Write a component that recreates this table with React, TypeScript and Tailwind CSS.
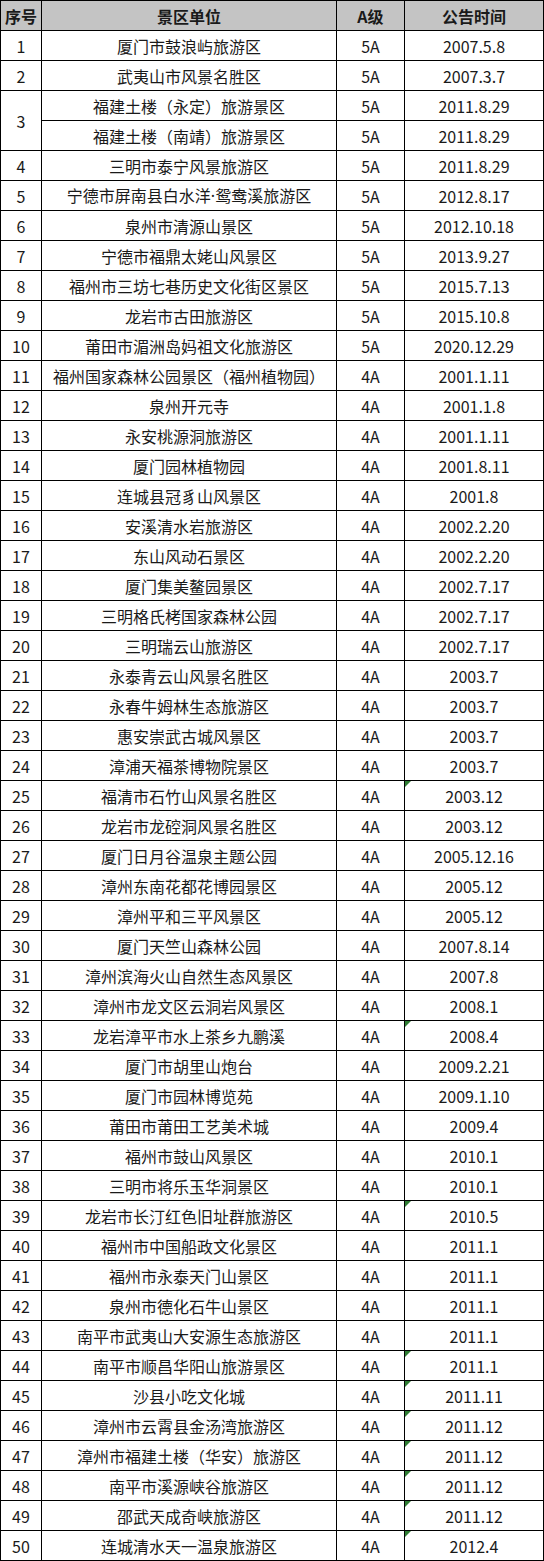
const rows: [string, string[], string, string[], boolean?][] = [
  ["1", ["厦门市鼓浪屿旅游区"], "5A", ["2007.5.8"]],
  ["2", ["武夷山市风景名胜区"], "5A", ["2007.3.7"]],
  ["3", ["福建土楼（永定）旅游景区", "福建土楼（南靖）旅游景区"], "5A", ["2011.8.29", "2011.8.29"]],
  ["4", ["三明市泰宁风景旅游区"], "5A", ["2011.8.29"]],
  ["5", ["宁德市屏南县白水洋·鸳鸯溪旅游区"], "5A", ["2012.8.17"]],
  ["6", ["泉州市清源山景区"], "5A", ["2012.10.18"]],
  ["7", ["宁德市福鼎太姥山风景区"], "5A", ["2013.9.27"]],
  ["8", ["福州市三坊七巷历史文化街区景区"], "5A", ["2015.7.13"]],
  ["9", ["龙岩市古田旅游区"], "5A", ["2015.10.8"]],
  ["10", ["莆田市湄洲岛妈祖文化旅游区"], "5A", ["2020.12.29"]],
  ["11", ["福州国家森林公园景区（福州植物园）"], "4A", ["2001.1.11"]],
  ["12", ["泉州开元寺"], "4A", ["2001.1.8"]],
  ["13", ["永安桃源洞旅游区"], "4A", ["2001.1.11"]],
  ["14", ["厦门园林植物园"], "4A", ["2001.8.11"]],
  ["15", ["连城县冠豸山风景区"], "4A", ["2001.8"]],
  ["16", ["安溪清水岩旅游区"], "4A", ["2002.2.20"]],
  ["17", ["东山风动石景区"], "4A", ["2002.2.20"]],
  ["18", ["厦门集美鳌园景区"], "4A", ["2002.7.17"]],
  ["19", ["三明格氏栲国家森林公园"], "4A", ["2002.7.17"]],
  ["20", ["三明瑞云山旅游区"], "4A", ["2002.7.17"]],
  ["21", ["永泰青云山风景名胜区"], "4A", ["2003.7"]],
  ["22", ["永春牛姆林生态旅游区"], "4A", ["2003.7"]],
  ["23", ["惠安崇武古城风景区"], "4A", ["2003.7"]],
  ["24", ["漳浦天福茶博物院景区"], "4A", ["2003.7"]],
  ["25", ["福清市石竹山风景名胜区"], "4A", ["2003.12"], true],
  ["26", ["龙岩市龙硿洞风景名胜区"], "4A", ["2003.12"]],
  ["27", ["厦门日月谷温泉主题公园"], "4A", ["2005.12.16"]],
  ["28", ["漳州东南花都花博园景区"], "4A", ["2005.12"]],
  ["29", ["漳州平和三平风景区"], "4A", ["2005.12"]],
  ["30", ["厦门天竺山森林公园"], "4A", ["2007.8.14"]],
  ["31", ["漳州滨海火山自然生态风景区"], "4A", ["2007.8"]],
  ["32", ["漳州市龙文区云洞岩风景区"], "4A", ["2008.1"]],
  ["33", ["龙岩漳平市水上茶乡九鹏溪"], "4A", ["2008.4"], true],
  ["34", ["厦门市胡里山炮台"], "4A", ["2009.2.21"]],
  ["35", ["厦门市园林博览苑"], "4A", ["2009.1.10"]],
  ["36", ["莆田市莆田工艺美术城"], "4A", ["2009.4"]],
  ["37", ["福州市鼓山风景区"], "4A", ["2010.1"]],
  ["38", ["三明市将乐玉华洞景区"], "4A", ["2010.1"]],
  ["39", ["龙岩市长汀红色旧址群旅游区"], "4A", ["2010.5"], true],
  ["40", ["福州市中国船政文化景区"], "4A", ["2011.1"]],
  ["41", ["福州市永泰天门山景区"], "4A", ["2011.1"]],
  ["42", ["泉州市德化石牛山景区"], "4A", ["2011.1"]],
  ["43", ["南平市武夷山大安源生态旅游区"], "4A", ["2011.1"]],
  ["44", ["南平市顺昌华阳山旅游景区"], "4A", ["2011.1"], true],
  ["45", ["沙县小吃文化城"], "4A", ["2011.11"], true],
  ["46", ["漳州市云霄县金汤湾旅游区"], "4A", ["2011.12"], true],
  ["47", ["漳州市福建土楼（华安）旅游区"], "4A", ["2011.12"], true],
  ["48", ["南平市溪源峡谷旅游区"], "4A", ["2011.12"], true],
  ["49", ["邵武天成奇峡旅游区"], "4A", ["2011.12"], true],
  ["50", ["连城清水天一温泉旅游区"], "4A", ["2012.4"], true],
];

const cell = "border border-black text-center align-middle p-0 leading-none whitespace-nowrap";

function Flag() {
  // excel's little green corner mark
  return <span className="absolute left-0 top-0 w-0 h-0 border-t-[6px] border-r-[6px] border-t-[#2e7d32] border-r-transparent" />;
}

// the middle dot should be the narrow latin one, not the full-width CJK glyph
function Name({ text }: { text: string }) {
  const parts = text.split("·");
  if (parts.length === 1) return <>{text}</>;
  return (
    <>
      {parts[0]}
      <span className="font-['Noto_Sans',sans-serif]">·</span>
      {parts[1]}
    </>
  );
}

export default function App() {
  return (
    <main className="bg-white w-[544px] text-[#1a1a1a] font-['Noto_Sans_CJK_SC','Noto_Sans',sans-serif]">
      <table className="border-collapse table-fixed w-[543px] text-[16px]">
        <colgroup>
          <col className="w-[41px]" />
          <col className="w-[295px]" />
          <col className="w-[68px]" />
          <col className="w-[139px]" />
        </colgroup>
        <thead>
          <tr className="h-[30px] bg-[#c4c4c4] font-bold">
            <th className={cell}>序号</th>
            <th className={cell}>景区单位</th>
            <th className={cell}>A级</th>
            <th className={cell}>公告时间</th>
          </tr>
        </thead>
        <tbody>
          {rows.flatMap(([no, names, level, dates, flag]) =>
            names.map((name, i) => (
              <tr key={no + "-" + i} className="h-[30px]">
                {i === 0 && (
                  <td rowSpan={names.length} className={cell}>{no}</td>
                )}
                <td className={cell}><Name text={name} /></td>
                <td className={cell}>{level}</td>
                <td className={cell + " relative"}>
                  {flag && <Flag />}
                  {dates[i]}
                </td>
              </tr>
            ))
          )}
        </tbody>
      </table>
    </main>
  );
}
